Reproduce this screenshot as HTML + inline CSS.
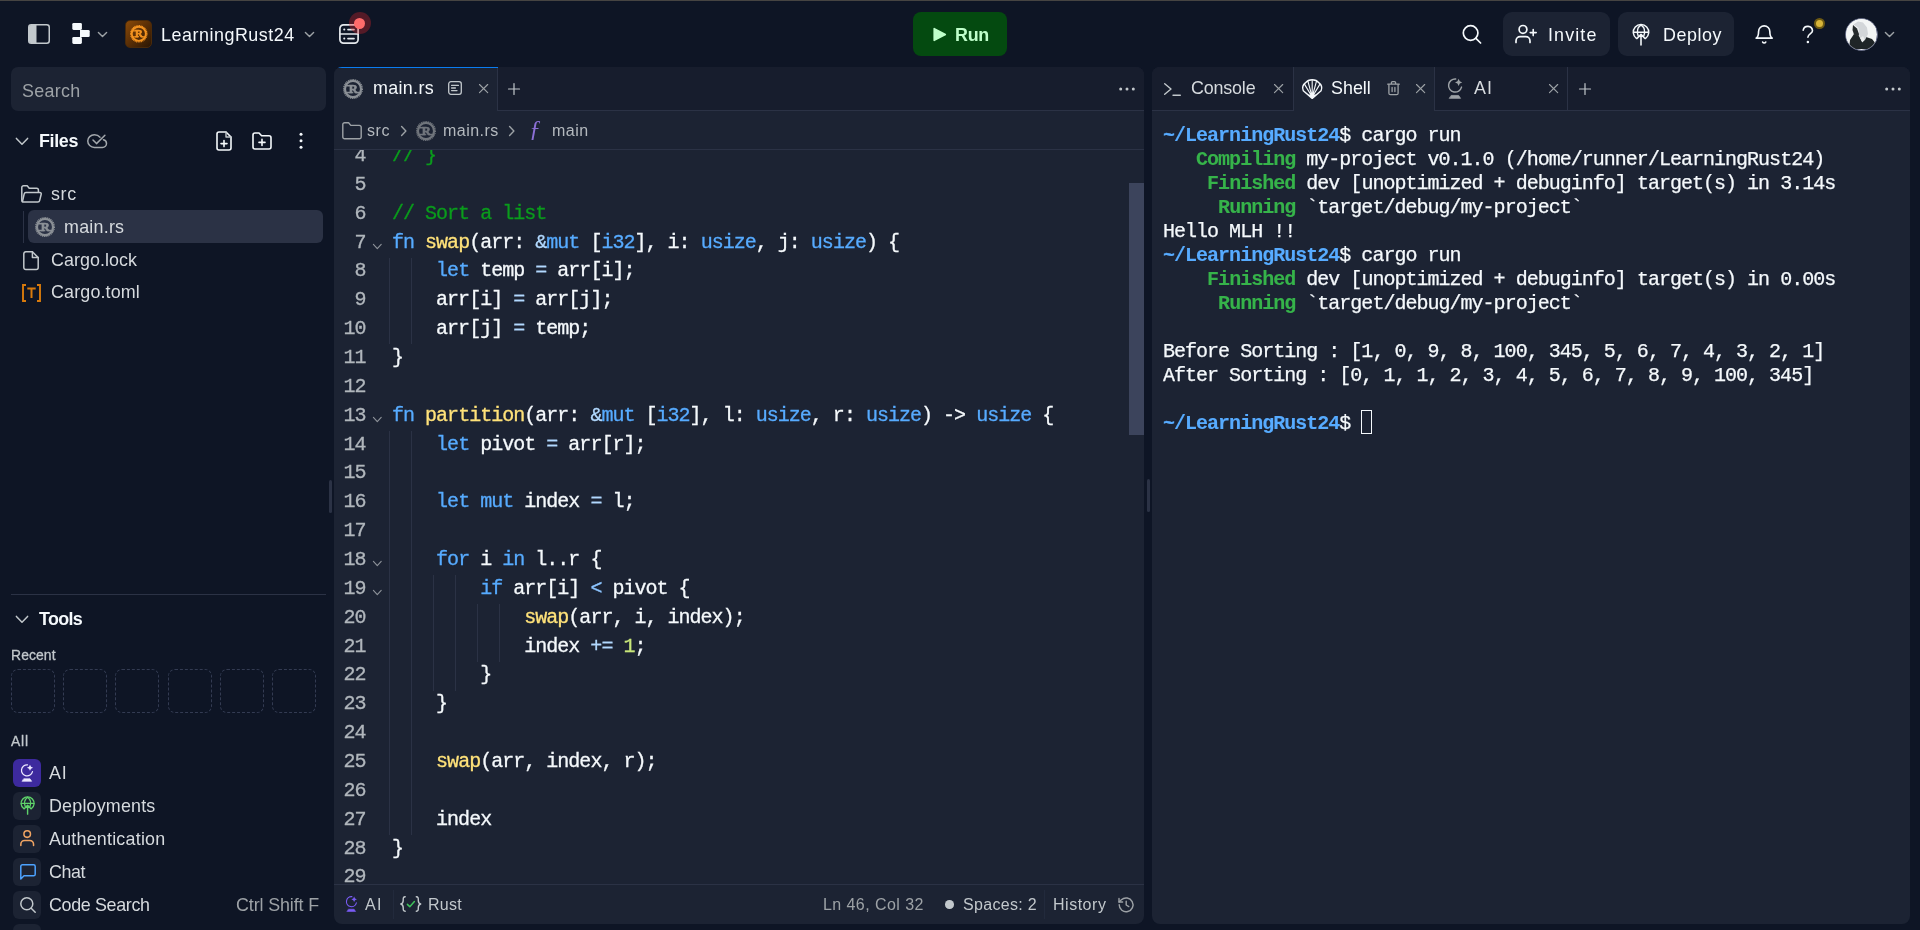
<!DOCTYPE html>
<html><head><meta charset="utf-8"><title>LearningRust24 - Replit</title>
<style>
*{box-sizing:border-box;margin:0;padding:0}
html,body{width:1920px;height:930px;overflow:hidden;background:#0e1525;color:#f5f9fc;font-family:"Liberation Sans",sans-serif;font-size:18px}
body{position:relative}
.abs{position:absolute}
svg{display:block;overflow:visible}
.ic{position:absolute;fill:none;stroke:currentColor;stroke-width:2;stroke-linecap:round;stroke-linejoin:round}
.t{position:absolute;white-space:pre;line-height:1;will-change:transform}
.mono{font-family:"Liberation Mono","DejaVu Sans Mono",monospace}
.pane{position:absolute;top:67px;height:856.5px;background:#1c2333;border-radius:8px;overflow:hidden}
.code{position:absolute;left:0;top:0;white-space:pre;font-family:"Liberation Mono","DejaVu Sans Mono",monospace;font-size:20px;letter-spacing:-0.982px;line-height:28.865px;color:#f5f9fc;will-change:transform;-webkit-text-stroke:0.3px currentColor}
.term{position:absolute;white-space:pre;font-family:"Liberation Mono","DejaVu Sans Mono",monospace;font-size:20px;letter-spacing:-0.982px;line-height:24px;color:#f5f9fc;will-change:transform;-webkit-text-stroke:0.25px currentColor}
.k{color:#57abff}.f{color:#ffe27a}.c{color:#0a9c1c}.o{color:#b2d9ff}.n{color:#c8e67a}.o2{color:#8cc4ff}
.tb{color:#57abff;font-weight:bold;-webkit-text-stroke:0.1px currentColor}.tg{color:#36b34a;font-weight:bold;-webkit-text-stroke:0.1px currentColor}
.g{position:absolute;width:1px;background:#2b3245}
</style></head><body>
<!-- top bar -->
<div class="abs" style="left:0;top:0;width:1920px;height:1px;background:#464442"></div><svg class="ic" style="left:28px;top:24px;color:#c2c8cc" width="22" height="20" viewBox="0 0 22 20"><rect x="0.75" y="0.75" width="20.5" height="18.5" rx="2.5" stroke-width="1.5"/><path d="M1 3 a2 2 0 0 1 2-2 h5.5 v18 h-5.5 a2 2 0 0 1 -2 -2z" fill="#c2c8cc" stroke="none"/></svg><svg class="abs" style="left:71.5px;top:23.3px" width="18" height="21" viewBox="0 0 18 21"><rect x="0.3" y="0" width="9.6" height="6.9" rx="1.3" fill="#f5f9fc"/><rect x="9.9" y="6.9" width="7.8" height="7.1" rx="1.3" fill="#f5f9fc"/><rect x="0.3" y="14" width="9.6" height="6.9" rx="1.3" fill="#f5f9fc"/><rect x="8" y="6.9" width="3" height="7.1" fill="#f5f9fc"/></svg><svg class="ic" style="left:98px;top:32px;color:#9da2a6" width="9" height="5" viewBox="0 0 9 5"><path d="M0.4 0.4 L4.5 4.6 L8.6 0.4" stroke-width="1.4"/></svg><div class="abs" style="left:125px;top:20px;width:27px;height:28px;border-radius:5px;background:linear-gradient(135deg,#8a4a08 0%,#5e3106 45%,#2a1604 100%);border:1px solid #4a2a0a"></div><svg class="abs" style="left:129.6px;top:25px;will-change:transform" width="17.6" height="17.6" viewBox="0 0 20 20"><circle cx="10" cy="10" r="9.25" fill="none" stroke="#f39320" stroke-width="1.5" stroke-dasharray="1.05 0.766"/><circle cx="10" cy="10" r="8.05" fill="none" stroke="#f39320" stroke-width="2.2"/><text x="10.3" y="14.1" text-anchor="middle" font-family="Liberation Serif,serif" font-weight="bold" font-size="12.4" fill="#f39320" stroke="#f39320" stroke-width="0.7">R</text><path d="M3.2 6.7H11.5M3 13.5H9.2M12.6 13.5H17" stroke="#f39320" stroke-width="1.5"/></svg><div class="t" id="t1" style="left:161.40px;top:26.55px;font-size:17.900px;color:#f5f9fc;letter-spacing:0.534px;">LearningRust24</div><svg class="ic" style="left:305px;top:32px;color:#9da2a6" width="9" height="5" viewBox="0 0 9 5"><path d="M0.4 0.4 L4.5 4.6 L8.6 0.4" stroke-width="1.4"/></svg><svg class="ic" style="left:339px;top:24px;color:#e4e8ec" width="20" height="20" viewBox="0 0 20 20"><rect x="0.9" y="0.9" width="18.2" height="18.2" rx="3.6" stroke-width="1.7"/><path d="M1 10h18" stroke-width="1.7"/><path d="M5.2 5.6h.1M5.2 14.6h.1" stroke-width="2"/><path d="M9 5.6h6M9 14.6h6" stroke-width="1.7"/></svg><div class="abs" style="left:348.6px;top:12.1px;width:22px;height:22px;border-radius:50%;background:rgba(214,36,44,.35)"></div><div class="abs" style="left:354px;top:17.5px;width:11px;height:11px;border-radius:50%;background:#ff6b6b"></div><div class="abs" style="left:913px;top:12px;width:94px;height:44px;border-radius:8px;background:#044a10"></div><svg class="abs" style="left:933px;top:27px" width="14" height="15" viewBox="0 0 14 15"><path d="M1.2 1.6 L12.3 7.5 L1.2 13.4z" fill="#bfffca" stroke="#bfffca" stroke-width="1.6" stroke-linejoin="round"/></svg><div class="t" id="t2" style="left:954.50px;top:26.55px;font-size:17.900px;color:#bfffca;font-weight:bold;letter-spacing:-0.260px;">Run</div><svg class="ic" style="left:1462px;top:24px;color:#f5f9fc" width="20" height="20" viewBox="0 0 20 20"><circle cx="8.6" cy="9" r="7.3" stroke-width="1.7"/><path d="M13.9 14.3 L18.6 19" stroke-width="1.7"/></svg><div class="abs" style="left:1503px;top:12px;width:107px;height:44px;border-radius:9px;background:#1c2333"></div><svg class="ic" style="left:1515px;top:24px;color:#f5f9fc" width="22" height="20" viewBox="0 0 22 20"><circle cx="8" cy="5.4" r="3.9" stroke-width="1.7"/><path d="M1 18.5 v-1.6 a4.2 4.2 0 0 1 4.2 -4.2 h5.6 a4.2 4.2 0 0 1 4.2 4.2 v1.6" stroke-width="1.7"/><path d="M18.2 5.6 v6 M15.2 8.6 h6" stroke-width="1.6"/></svg><div class="t" id="t3" style="left:1548.20px;top:26.55px;font-size:17.900px;color:#f5f9fc;letter-spacing:1.122px;">Invite</div><div class="abs" style="left:1618px;top:12px;width:116px;height:44px;border-radius:9px;background:#1c2333"></div><svg class="ic" style="left:1632px;top:23.5px;color:#f5f9fc" width="18" height="22" viewBox="0 0 18 22"><path d="M4.4 14.4 A7.7 7.7 0 1 1 13.6 14.4" stroke-width="1.5"/><path d="M1.5 8.3 h15" stroke-width="1.395"/><path d="M6.3 12.2 C4.7 8 5.6 3.4 9 0.9 C12.4 3.4 13.3 8 11.7 12.2" stroke-width="1.395"/><path d="M9 21 V10.6 M5 14.5 L9 10.4 L13 14.5" stroke-width="1.575"/></svg><div class="t" id="t4" style="left:1663.20px;top:26.55px;font-size:17.900px;color:#f5f9fc;letter-spacing:0.549px;">Deploy</div><svg class="ic" style="left:1754.8px;top:23.6px;color:#f5f9fc" width="18.4" height="20.6" viewBox="0 0 18 20"><path d="M3.5 7.2 a5.5 5.5 0 0 1 11 0 c0 5.2 2.4 6.6 2.4 6.6 H1.1 s2.4 -1.4 2.4 -6.6z" stroke-width="1.6"/><path d="M7.5 17.6 a1.7 1.7 0 0 0 3 0" stroke-width="1.6"/></svg><svg class="ic" style="left:1802px;top:25px;color:#f5f9fc" width="12" height="19" viewBox="0 0 12 19"><path d="M1.2 5.2 a4.7 4.7 0 0 1 9.3 0.6 c0 2.6 -4.6 3 -4.6 6.5" stroke-width="1.6"/><circle cx="5.9" cy="16.9" r="1.25" fill="#f5f9fc" stroke="none"/></svg><div class="abs" style="left:1814px;top:18.3px;width:11px;height:11px;border-radius:50%;background:#6e5a12"></div><div class="abs" style="left:1816px;top:20.3px;width:7px;height:7px;border-radius:50%;background:#d8b53a"></div><div class="abs" style="left:1845px;top:18px;width:33px;height:33px;border-radius:50%;border:1.5px solid #5b6280;overflow:hidden;background:#e9eaec"><svg width="30" height="30" viewBox="0 0 30 30"><rect width="30" height="30" fill="#f3f5f5"/><path d="M3 30 L4 21 L8 15 L13 17 L16 23 L20 18 L26 20 L30 25 L30 30 Z" fill="#1f2527"/><path d="M7.5 5.5 L12 2.5 L17 3.5 L21 8.5 L22 15 L19 21 L16.5 23 L13 16 L12.5 9 Z" fill="#d3d6d9"/><path d="M7 6 L11 9.5 L13 15 L12.5 18 L8 15.5 L6.5 11 Z" fill="#262b2c"/><path d="M14.5 19 L16.5 23.5 L18.5 20 L17 17 Z" fill="#eceeee"/></svg></div><svg class="ic" style="left:1885px;top:32px;color:#9da2a6" width="9" height="5" viewBox="0 0 9 5"><path d="M0.4 0.4 L4.5 4.6 L8.6 0.4" stroke-width="1.4"/></svg>
<!-- sidebar -->
<div class="abs" style="left:11px;top:67px;width:315px;height:44px;border-radius:7px;background:#1c2333"></div><div class="t" id="t5" style="left:21.50px;top:82.75px;font-size:17.900px;color:#9da2a6;letter-spacing:0.285px;">Search</div><svg class="ic" style="left:16px;top:138px;color:#c2c8cc" width="12" height="6.6" viewBox="0 0 12 6.6"><path d="M0.4 0.4 L6 6.2 L11.6 0.4" stroke-width="1.5"/></svg><div class="t" id="t6" style="left:38.70px;top:132.75px;font-size:17.900px;color:#f5f9fc;font-weight:bold;letter-spacing:-0.356px;">Files</div><svg class="ic" style="left:86.9px;top:133.9px;color:#a3a8ad" width="20" height="14" viewBox="0 0 20 14"><path d="M13 3.2 C11.6 1.5 9.6 0.75 7.4 0.75 C3.7 0.75 0.75 3.6 0.75 7.1 C0.75 10.6 3.7 13.4 7.4 13.4 H15.4 C17.7 13.4 19.5 11.7 19.5 9.5 C19.5 7.6 18.2 6.1 16.4 5.7" stroke-width="1.5"/><path d="M6 6 L9.5 9.6 L17.9 1.3" stroke-width="1.5"/></svg><svg class="ic" style="left:216px;top:131px;color:#f5f9fc" width="16" height="20" viewBox="0 0 16 20"><path d="M10 1 H3 A2 2 0 0 0 1 3 V17 A2 2 0 0 0 3 19 H13 A2 2 0 0 0 15 17 V6 Z" stroke-width="1.6"/><path d="M10 1 V6 H15" stroke-width="1.4" stroke="#c2c8cc"/><path d="M8 9.6 V15.6 M5 12.6 H11" stroke-width="1.6"/></svg><svg class="ic" style="left:252px;top:132px;color:#f5f9fc" width="20" height="18" viewBox="0 0 20 18"><path d="M1 3 A2 2 0 0 1 3 1 H7 L9.6 3.8 H17 A2 2 0 0 1 19 5.8 V15 A2 2 0 0 1 17 17 H3 A2 2 0 0 1 1 15 Z" stroke-width="1.6"/><path d="M10 7.4 V13.4 M7 10.4 H13" stroke-width="1.6"/></svg><svg class="abs" style="left:299px;top:132.3px" width="4" height="17" viewBox="0 0 4 17"><circle cx="2" cy="2.2" r="1.5" fill="#f5f9fc"/><circle cx="2" cy="8.7" r="1.5" fill="#f5f9fc"/><circle cx="2" cy="15.2" r="1.5" fill="#f5f9fc"/></svg><svg class="ic" style="left:21px;top:185px;color:#c2c8cc" width="21" height="18" viewBox="0 0 21 18"><path d="M1.4 16.6 A1.6 1.6 0 0 1 0.8 15.4 V2.6 A1.8 1.8 0 0 1 2.6 0.8 H6.2 L8.2 3.2 H15.6 A1.8 1.8 0 0 1 17.4 5 V7.2" stroke-width="1.5"/><path d="M1.4 16.8 L3.2 8.8 A1.8 1.8 0 0 1 5 7.4 H18.8 A1.4 1.4 0 0 1 20.2 9.2 L18.6 15.6 A1.8 1.8 0 0 1 16.8 17 H2 " stroke-width="1.5"/></svg><div class="t" id="t7" style="left:50.60px;top:185.75px;font-size:17.900px;color:#d6dade;letter-spacing:0.614px;">src</div><div class="abs" style="left:23px;top:210.5px;width:1px;height:32px;background:#2b3245"></div><div class="abs" style="left:28px;top:210.3px;width:295px;height:32.4px;border-radius:6px;background:#2b3245"></div><svg class="abs" style="left:34.9px;top:217px;will-change:transform" width="20" height="20" viewBox="0 0 20 20"><circle cx="10" cy="10" r="9.25" fill="none" stroke="#8b9096" stroke-width="1.5" stroke-dasharray="1.05 0.766"/><circle cx="10" cy="10" r="8.05" fill="none" stroke="#8b9096" stroke-width="2.2"/><text x="10.3" y="14.1" text-anchor="middle" font-family="Liberation Serif,serif" font-weight="bold" font-size="12.4" fill="#8b9096" stroke="#8b9096" stroke-width="0.7">R</text><path d="M3.2 6.7H11.5M3 13.5H9.2M12.6 13.5H17" stroke="#8b9096" stroke-width="1.5"/></svg><div class="t" id="t8" style="left:64.40px;top:218.85px;font-size:17.900px;color:#d6dade;letter-spacing:0.235px;">main.rs</div><svg class="ic" style="left:23px;top:250.5px;color:#c2c8cc" width="16" height="19.4" viewBox="0 0 16 19.4"><path d="M9.4 0.8 H2.8 A2 2 0 0 0 0.8 2.8 V16.6 A2 2 0 0 0 2.8 18.6 H13.2 A2 2 0 0 0 15.2 16.6 V6.6 Z" stroke-width="1.5"/><path d="M9.4 0.8 V6.6 H15.2" stroke-width="1.5"/></svg><div class="t" id="t9" style="left:50.60px;top:251.95px;font-size:17.900px;color:#d6dade;letter-spacing:0.048px;">Cargo.lock</div><svg class="ic" style="left:21.6px;top:284.2px;color:#d87a0c" width="19" height="18" viewBox="0 0 19 18"><path d="M4 1 H1 V17 H4 M15 1 H18 V17 H15" stroke-width="1.9" stroke-linejoin="miter" stroke-linecap="butt"/><path d="M5.3 4.6 H13.7 M9.5 4.6 V14" stroke-width="2" stroke-linecap="butt"/></svg><div class="t" id="t10" style="left:50.60px;top:284.35px;font-size:17.900px;color:#d6dade;letter-spacing:0.150px;">Cargo.toml</div><div class="abs" style="left:11px;top:594px;width:315px;height:1px;background:#2b3245"></div><svg class="ic" style="left:16px;top:615.5px;color:#c2c8cc" width="12" height="6.6" viewBox="0 0 12 6.6"><path d="M0.4 0.4 L6 6.2 L11.6 0.4" stroke-width="1.5"/></svg><div class="t" id="t11" style="left:38.70px;top:610.75px;font-size:17.900px;color:#f5f9fc;font-weight:bold;letter-spacing:-0.678px;">Tools</div><div class="t" id="t12" style="left:10.80px;top:648.53px;font-size:13.900px;color:#c2c8cc;letter-spacing:0.097px;-webkit-text-stroke:0.3px #c2c8cc;">Recent</div><div class="abs" style="left:11.00px;top:669px;width:44px;height:44px;border-radius:7px;border:1px dashed #333b52"></div><div class="abs" style="left:63.24px;top:669px;width:44px;height:44px;border-radius:7px;border:1px dashed #333b52"></div><div class="abs" style="left:115.48px;top:669px;width:44px;height:44px;border-radius:7px;border:1px dashed #333b52"></div><div class="abs" style="left:167.72px;top:669px;width:44px;height:44px;border-radius:7px;border:1px dashed #333b52"></div><div class="abs" style="left:219.96px;top:669px;width:44px;height:44px;border-radius:7px;border:1px dashed #333b52"></div><div class="abs" style="left:272.20px;top:669px;width:44px;height:44px;border-radius:7px;border:1px dashed #333b52"></div><div class="t" id="t13" style="left:10.80px;top:734.53px;font-size:13.900px;color:#c2c8cc;letter-spacing:0.854px;-webkit-text-stroke:0.3px #c2c8cc;">All</div><div class="abs" style="left:13px;top:758.7px;width:28px;height:28px;border-radius:6px;background:#3d2a9e"></div><svg class="ic" style="left:20.7px;top:763.6px;color:#ece8ff" width="12.4" height="18" viewBox="0 0 15 21.5"><path d="M7.9 0.85 A6.75 6.75 0 1 0 13.9 9.2" stroke-width="1.5"/><path d="M10.9 0.7 L12.1 3.2 L14.6 4.4 L12.1 5.6 L10.9 8.1 L9.7 5.6 L7.2 4.4 L9.7 3.2 Z" fill="#ece8ff" stroke="none"/><path d="M3.6 17.8 H10.9 L12.9 20.8 H1.6 Z" fill="#ece8ff" stroke-width="0.8"/></svg><div class="t" id="t14" style="left:49.00px;top:764.55px;font-size:17.900px;color:#d6dade;letter-spacing:0.747px;">AI</div><div class="abs" style="left:13px;top:791.8px;width:28px;height:28px;border-radius:6px;background:#1c2333"></div><svg class="ic" style="left:19.8px;top:796.2px;color:#5fd36a" width="15.2" height="19.4" viewBox="0 0 18 22"><path d="M4.4 14.4 A7.7 7.7 0 1 1 13.6 14.4" stroke-width="1.6"/><path d="M1.5 8.3 h15" stroke-width="1.488"/><path d="M6.3 12.2 C4.7 8 5.6 3.4 9 0.9 C12.4 3.4 13.3 8 11.7 12.2" stroke-width="1.488"/><path d="M9 21 V10.6 M5 14.5 L9 10.4 L13 14.5" stroke-width="1.68"/></svg><div class="t" id="t15" style="left:49.00px;top:797.65px;font-size:17.900px;color:#d6dade;letter-spacing:0.189px;">Deployments</div><div class="abs" style="left:13px;top:824.9px;width:28px;height:28px;border-radius:6px;background:#1c2333"></div><svg class="ic" style="left:20.3px;top:830.3px;color:#f0a463" width="14.4" height="16.4" viewBox="0 0 14 16"><circle cx="7" cy="4" r="3.2" stroke-width="1.5"/><path d="M0.8 15.2 V13.8 A3.6 3.6 0 0 1 4.4 10.2 H9.6 A3.6 3.6 0 0 1 13.2 13.8 V15.2" stroke-width="1.5"/></svg><div class="t" id="t16" style="left:49.00px;top:830.65px;font-size:17.900px;color:#d6dade;letter-spacing:0.215px;">Authentication</div><div class="abs" style="left:13px;top:858px;width:28px;height:28px;border-radius:6px;background:#1c2333"></div><svg class="ic" style="left:19.5px;top:864px;color:#4da3ff" width="16" height="16" viewBox="0 0 16 16"><path d="M15.2 10.2 A1.6 1.6 0 0 1 13.6 11.8 H4 L0.8 15 V2.4 A1.6 1.6 0 0 1 2.4 0.8 H13.6 A1.6 1.6 0 0 1 15.2 2.4 Z" stroke-width="1.5"/></svg><div class="t" id="t17" style="left:49.00px;top:863.75px;font-size:17.900px;color:#d6dade;letter-spacing:-0.399px;">Chat</div><div class="abs" style="left:13px;top:891px;width:28px;height:28px;border-radius:6px;background:#1c2333"></div><svg class="ic" style="left:19.5px;top:897px;color:#c2c8cc" width="16" height="16" viewBox="0 0 16 16"><circle cx="6.8" cy="6.8" r="6" stroke-width="1.5"/><path d="M11.2 11.2 L15.2 15.2" stroke-width="1.5"/></svg><div class="t" id="t18" style="left:49.00px;top:896.85px;font-size:17.900px;color:#d6dade;letter-spacing:-0.349px;">Code Search</div><div class="t" id="t19" style="left:235.80px;top:896.85px;font-size:17.900px;color:#9da2a6;letter-spacing:-0.125px;">Ctrl Shift F</div><div class="abs" style="left:13px;top:924.1px;width:28px;height:28px;border-radius:6px;background:#1c2333"></div>
<!-- editor -->
<div class="pane" style="left:334px;width:810px"><div class="abs" style="left:0;top:0;width:810px;height:44px;background:#171d2d;border-bottom:1px solid #2b3245"></div><div class="abs" style="left:0;top:0;width:164px;height:44px;background:#1c2333;border-right:1px solid #2b3245"></div><div class="abs" style="left:3px;top:0;width:160.5px;height:1.3px;background:#0a7cf0"></div><div class="abs" style="left:0;top:82px;width:810px;height:1px;background:#2b3245"></div><div class="abs" style="left:0;top:817px;width:810px;height:1px;background:#2b3245"></div><div class="abs" style="left:794.5px;top:116px;width:15.5px;height:252px;background:#3c445c"></div></div><svg class="abs" style="left:342.8px;top:78.5px;will-change:transform" width="20" height="20" viewBox="0 0 20 20"><circle cx="10" cy="10" r="9.25" fill="none" stroke="#8b9096" stroke-width="1.5" stroke-dasharray="1.05 0.766"/><circle cx="10" cy="10" r="8.05" fill="none" stroke="#8b9096" stroke-width="2.2"/><text x="10.3" y="14.1" text-anchor="middle" font-family="Liberation Serif,serif" font-weight="bold" font-size="12.4" fill="#8b9096" stroke="#8b9096" stroke-width="0.7">R</text><path d="M3.2 6.7H11.5M3 13.5H9.2M12.6 13.5H17" stroke="#8b9096" stroke-width="1.5"/></svg><div class="t" id="t20" style="left:373.20px;top:79.70px;font-size:17.900px;color:#f5f9fc;letter-spacing:0.335px;">main.rs</div><svg class="ic" style="left:448px;top:81px;color:#c2c8cc" width="14" height="14" viewBox="0 0 14 14"><rect x="0.7" y="0.7" width="12.6" height="12.6" rx="2.2" stroke-width="1.3"/><path d="M3.6 4.4 H10.4 M3.6 7 H7.4 M3.6 9.6 H9" stroke-width="1.3"/></svg><svg class="ic" style="left:478.6px;top:83.9px;color:#9da2a6" width="9.2" height="9.2" viewBox="0 0 9.2 9.2"><path d="M0.5 0.5 L8.7 8.7 M8.7 0.5 L0.5 8.7" stroke-width="1.15"/></svg><svg class="ic" style="left:508px;top:82.5px;color:#c2c8cc" width="12" height="12" viewBox="0 0 12 12"><path d="M6 0.5 V11.5 M0.5 6 H11.5" stroke-width="1.2"/></svg><svg class="abs" style="left:1119px;top:87.3px" width="16" height="4" viewBox="0 0 16 4"><circle cx="1.7" cy="2" r="1.5" fill="#c2c8cc"/><circle cx="8" cy="2" r="1.5" fill="#c2c8cc"/><circle cx="14.3" cy="2" r="1.5" fill="#c2c8cc"/></svg><svg class="ic" style="left:342px;top:121.5px;color:#9da2a6" width="20" height="17.5" viewBox="0 0 20 17.5"><path d="M0.8 2.6 A1.8 1.8 0 0 1 2.6 0.8 H6.6 L8.8 3.4 H17.4 A1.8 1.8 0 0 1 19.2 5.2 V14.9 A1.8 1.8 0 0 1 17.4 16.7 H2.6 A1.8 1.8 0 0 1 0.8 14.9 Z" stroke-width="1.4"/></svg><div class="t" id="t21" style="left:367.20px;top:123.06px;font-size:16.000px;color:#b4b9be;letter-spacing:0.557px;">src</div><svg class="ic" style="left:401px;top:125.5px;color:#9da2a6" width="5.5" height="10" viewBox="0 0 5.5 10"><path d="M0.6 0.6 L4.9 5 L0.6 9.4" stroke-width="1.4"/></svg><svg class="abs" style="left:416px;top:120.5px;will-change:transform" width="20" height="20" viewBox="0 0 20 20"><circle cx="10" cy="10" r="9.25" fill="none" stroke="#70757c" stroke-width="1.5" stroke-dasharray="1.05 0.766"/><circle cx="10" cy="10" r="8.05" fill="none" stroke="#70757c" stroke-width="2.2"/><text x="10.3" y="14.1" text-anchor="middle" font-family="Liberation Serif,serif" font-weight="bold" font-size="12.4" fill="#70757c" stroke="#70757c" stroke-width="0.7">R</text><path d="M3.2 6.7H11.5M3 13.5H9.2M12.6 13.5H17" stroke="#70757c" stroke-width="1.5"/></svg><div class="t" id="t22" style="left:443.40px;top:123.06px;font-size:16.000px;color:#b4b9be;letter-spacing:0.478px;">main.rs</div><svg class="ic" style="left:509px;top:125.5px;color:#9da2a6" width="5.5" height="10" viewBox="0 0 5.5 10"><path d="M0.6 0.6 L4.9 5 L0.6 9.4" stroke-width="1.4"/></svg><div class="t" style="left:528.5px;top:115.5px;font-size:24px;font-style:italic;color:#8b6fd6;font-family:'Liberation Serif','DejaVu Serif',serif">ƒ</div><div class="t" id="t23" style="left:551.50px;top:123.06px;font-size:16.000px;color:#b4b9be;letter-spacing:0.453px;">main</div><div class="abs" style="left:334px;top:150px;width:794px;height:734px;overflow:hidden"><div class="g" style="left:55.00px;top:107.84px;height:86.59px"></div><div class="g" style="left:55.00px;top:281.03px;height:404.11px"></div><div class="g" style="left:77.04px;top:107.84px;height:86.59px"></div><div class="g" style="left:77.04px;top:281.03px;height:404.11px"></div><div class="g" style="left:99.08px;top:425.36px;height:115.46px"></div><div class="g" style="left:121.12px;top:425.36px;height:115.46px"></div><div class="g" style="left:143.16px;top:454.22px;height:57.73px"></div><div class="g" style="left:165.20px;top:454.22px;height:57.73px"></div><svg class="ic" style="left:38.8px;top:93.73px;color:#8d9299" width="8.6" height="5" viewBox="0 0 8.6 5"><path d="M0.4 0.4 L4.3 4.6 L8.2 0.4" stroke-width="1.15"/></svg><svg class="ic" style="left:38.8px;top:266.92px;color:#8d9299" width="8.6" height="5" viewBox="0 0 8.6 5"><path d="M0.4 0.4 L4.3 4.6 L8.2 0.4" stroke-width="1.15"/></svg><svg class="ic" style="left:38.8px;top:411.245px;color:#8d9299" width="8.6" height="5" viewBox="0 0 8.6 5"><path d="M0.4 0.4 L4.3 4.6 L8.2 0.4" stroke-width="1.15"/></svg><svg class="ic" style="left:38.8px;top:440.11px;color:#8d9299" width="8.6" height="5" viewBox="0 0 8.6 5"><path d="M0.4 0.4 L4.3 4.6 L8.2 0.4" stroke-width="1.15"/></svg><div class="code" style="left:0;top:-7.62px;width:31.5px;text-align:right;color:#b0b6bc">4
5
6
7
8
9
10
11
12
13
14
15
16
17
18
19
20
21
22
23
24
25
26
27
28
29</div><div class="code" style="left:58px;top:-7.62px"><span class="c">// }</span>

<span class="c">// Sort a list</span>
<span class="k">fn</span> <span class="f">swap</span>(arr: <span class="o">&amp;</span><span class="k">mut</span> [<span class="k">i32</span>], i: <span class="k">usize</span>, j: <span class="k">usize</span>) {
    <span class="k">let</span> temp <span class="o">=</span> arr[i];
    arr[i] <span class="o">=</span> arr[j];
    arr[j] <span class="o">=</span> temp;
}

<span class="k">fn</span> <span class="f">partition</span>(arr: <span class="o">&amp;</span><span class="k">mut</span> [<span class="k">i32</span>], l: <span class="k">usize</span>, r: <span class="k">usize</span>) -&gt; <span class="k">usize</span> {
    <span class="k">let</span> pivot <span class="o">=</span> arr[r];

    <span class="k">let</span> <span class="k">mut</span> index <span class="o">=</span> l;

    <span class="k">for</span> i <span class="k">in</span> l..r {
        <span class="k">if</span> arr[i] <span class="o2">&lt;</span> pivot {
            <span class="f">swap</span>(arr, i, index);
            index <span class="o">+=</span> <span class="n">1</span>;
        }
    }

    <span class="f">swap</span>(arr, index, r);

    index
}
</div></div><svg class="ic" style="left:345.5px;top:896.2px;color:#7a5cf5" width="11.2" height="16" viewBox="0 0 15 21.5"><path d="M7.9 0.85 A6.75 6.75 0 1 0 13.9 9.2" stroke-width="1.5"/><path d="M10.9 0.7 L12.1 3.2 L14.6 4.4 L12.1 5.6 L10.9 8.1 L9.7 5.6 L7.2 4.4 L9.7 3.2 Z" fill="#7a5cf5" stroke="none"/><path d="M3.6 17.8 H10.9 L12.9 20.8 H1.6 Z" fill="#7a5cf5" stroke-width="0.8"/></svg><div class="t" id="t24" style="left:364.60px;top:896.96px;font-size:16.000px;color:#c2c8cc;letter-spacing:1.238px;">AI</div><div class="abs" style="left:392.5px;top:890px;width:1px;height:29px;background:#222a3c"></div><svg class="ic" style="left:399.5px;top:896px;color:#c2c8cc" width="21.5" height="16" viewBox="0 0 21.5 16"><path d="M5.2 0.8 C3 0.8 3.2 2.4 3.2 4.4 C3.2 6.6 2.4 7.6 0.8 8 C2.4 8.4 3.2 9.4 3.2 11.6 C3.2 13.6 3 15.2 5.2 15.2" stroke-width="1.4"/><path d="M16.3 0.8 C18.5 0.8 18.3 2.4 18.3 4.4 C18.3 6.6 19.1 7.6 20.7 8 C19.1 8.4 18.3 9.4 18.3 11.6 C18.3 13.6 18.5 15.2 16.3 15.2" stroke-width="1.4"/><path d="M7.4 8.4 L9.8 10.8 L14.4 5.6" stroke="#3fc25a" stroke-width="1.5"/></svg><div class="t" id="t25" style="left:427.60px;top:896.96px;font-size:16.000px;color:#c2c8cc;letter-spacing:0.273px;">Rust</div><div class="t" id="t26" style="left:823.40px;top:896.96px;font-size:16.000px;color:#9da2a6;letter-spacing:0.432px;">Ln 46, Col 32</div><div class="abs" style="left:945.1px;top:900.1px;width:8.6px;height:8.6px;border-radius:50%;background:#c2c8cc"></div><div class="t" id="t27" style="left:962.50px;top:896.96px;font-size:16.000px;color:#c2c8cc;letter-spacing:0.316px;">Spaces: 2</div><div class="abs" style="left:1044px;top:890px;width:1px;height:29px;background:#222a3c"></div><div class="t" id="t28" style="left:1053.40px;top:896.96px;font-size:16.000px;color:#c2c8cc;letter-spacing:0.517px;">History</div><svg class="ic" style="left:1117.8px;top:896.6px;color:#9da2a6" width="16" height="15.6" viewBox="0 0 16 15.6"><path d="M1.2 7.8 A6.9 6.9 0 1 0 3.4 2.8 L1 5" stroke-width="1.4"/><path d="M1 1.4 V5 H4.6" stroke-width="1.4"/><path d="M8.2 4.2 V8 L10.8 9.6" stroke-width="1.4"/></svg>
<!-- right pane -->
<div class="pane" style="left:1152px;width:757.5px"><div class="abs" style="left:0;top:0;width:758px;height:44px;background:#171d2d;border-bottom:1px solid #2b3245"></div><div class="abs" style="left:140.5px;top:0;width:142px;height:44px;background:#1c2333;border-left:1px solid #2b3245;border-right:1px solid #2b3245"></div><div class="abs" style="left:415px;top:0;width:1px;height:43px;background:#2b3245"></div></div><svg class="ic" style="left:1163.5px;top:82.5px;color:#c2c8cc" width="17" height="13" viewBox="0 0 17 13"><path d="M0.7 0.7 L7 6 L0.7 11.3" stroke-width="1.4"/><path d="M9 12.3 H16.3" stroke-width="1.4"/></svg><div class="t" id="t29" style="left:1191.00px;top:79.65px;font-size:17.900px;color:#d6dade;letter-spacing:-0.177px;">Console</div><svg class="ic" style="left:1274px;top:83.9px;color:#9da2a6" width="9.2" height="9.2" viewBox="0 0 9.2 9.2"><path d="M0.5 0.5 L8.7 8.7 M8.7 0.5 L0.5 8.7" stroke-width="1.15"/></svg><svg class="ic" style="left:1301.7px;top:79px;color:#f5f9fc" width="20.4" height="20.2" viewBox="0 0 20.4 20.2"><path d="M10.2 19.4 L1.3 11.8 C0.2 9.2 0.9 5.8 3.4 3.9 C5 1.9 7.6 0.8 10.2 0.8 C12.8 0.8 15.4 1.9 17 3.9 C19.5 5.8 20.2 9.2 19.1 11.8 Z" stroke-width="1.4"/><path d="M10.2 18 V1.2 M10.2 18 L5.9 2.2 M10.2 18 L14.5 2.2 M10.2 18 L2.6 5.4 M10.2 18 L17.8 5.4" stroke-width="1.1"/><path d="M10.2 19.2 L6.6 16 H13.8 Z" fill="#f5f9fc" stroke-width="0.8"/></svg><div class="t" id="t30" style="left:1330.60px;top:79.65px;font-size:17.900px;color:#f5f9fc;">Shell</div><svg class="ic" style="left:1387px;top:80.8px;color:#9da2a6" width="13" height="14.4" viewBox="0 0 13 14.4"><path d="M0.7 3.2 H12.3 M4.4 3.2 V1.8 A1.1 1.1 0 0 1 5.5 0.7 H7.5 A1.1 1.1 0 0 1 8.6 1.8 V3.2 M1.9 3.2 V12.2 A1.5 1.5 0 0 0 3.4 13.7 H9.6 A1.5 1.5 0 0 0 11.1 12.2 V3.2 M5.1 6.4 V10.6 M7.9 6.4 V10.6" stroke-width="1.3"/></svg><svg class="ic" style="left:1415.9px;top:83.9px;color:#9da2a6" width="9.2" height="9.2" viewBox="0 0 9.2 9.2"><path d="M0.5 0.5 L8.7 8.7 M8.7 0.5 L0.5 8.7" stroke-width="1.15"/></svg><svg class="ic" style="left:1447.8px;top:78.4px;color:#9da2a6" width="14.6" height="21.2" viewBox="0 0 15 21.5"><path d="M7.9 0.85 A6.75 6.75 0 1 0 13.9 9.2" stroke-width="1.5"/><path d="M10.9 0.7 L12.1 3.2 L14.6 4.4 L12.1 5.6 L10.9 8.1 L9.7 5.6 L7.2 4.4 L9.7 3.2 Z" fill="#9da2a6" stroke="none"/><path d="M3.6 17.8 H10.9 L12.9 20.8 H1.6 Z" fill="#9da2a6" stroke-width="0.8"/></svg><div class="t" id="t31" style="left:1474.00px;top:79.65px;font-size:17.900px;color:#d6dade;letter-spacing:1.047px;">AI</div><svg class="ic" style="left:1548.7px;top:83.9px;color:#9da2a6" width="9.2" height="9.2" viewBox="0 0 9.2 9.2"><path d="M0.5 0.5 L8.7 8.7 M8.7 0.5 L0.5 8.7" stroke-width="1.15"/></svg><svg class="ic" style="left:1579.3px;top:82.5px;color:#c2c8cc" width="12" height="12" viewBox="0 0 12 12"><path d="M6 0.5 V11.5 M0.5 6 H11.5" stroke-width="1.2"/></svg><svg class="abs" style="left:1885px;top:87.3px" width="16" height="4" viewBox="0 0 16 4"><circle cx="1.7" cy="2" r="1.5" fill="#c2c8cc"/><circle cx="8" cy="2" r="1.5" fill="#c2c8cc"/><circle cx="14.3" cy="2" r="1.5" fill="#c2c8cc"/></svg><div class="term" style="left:1163px;top:123.68px"><span class="tb">~/LearningRust24</span>$ cargo run
   <span class="tg">Compiling</span> my-project v0.1.0 (/home/runner/LearningRust24)
    <span class="tg">Finished</span> dev [unoptimized + debuginfo] target(s) in 3.14s
     <span class="tg">Running</span> `target/debug/my-project`
Hello MLH !!
<span class="tb">~/LearningRust24</span>$ cargo run
    <span class="tg">Finished</span> dev [unoptimized + debuginfo] target(s) in 0.00s
     <span class="tg">Running</span> `target/debug/my-project`

Before Sorting : [1, 0, 9, 8, 100, 345, 5, 6, 7, 4, 3, 2, 1]
After Sorting : [0, 1, 1, 2, 3, 4, 5, 6, 7, 8, 9, 100, 345]

<span class="tb">~/LearningRust24</span>$ </div><div class="abs" style="left:1361.36px;top:410px;width:11px;height:24px;border:1px solid #f5f9fc"></div><div class="abs" style="left:329px;top:480px;width:3px;height:33px;border-radius:2px;background:#2b3245"></div><div class="abs" style="left:1147px;top:479px;width:3px;height:33px;border-radius:2px;background:#2b3245"></div>
</body></html>
